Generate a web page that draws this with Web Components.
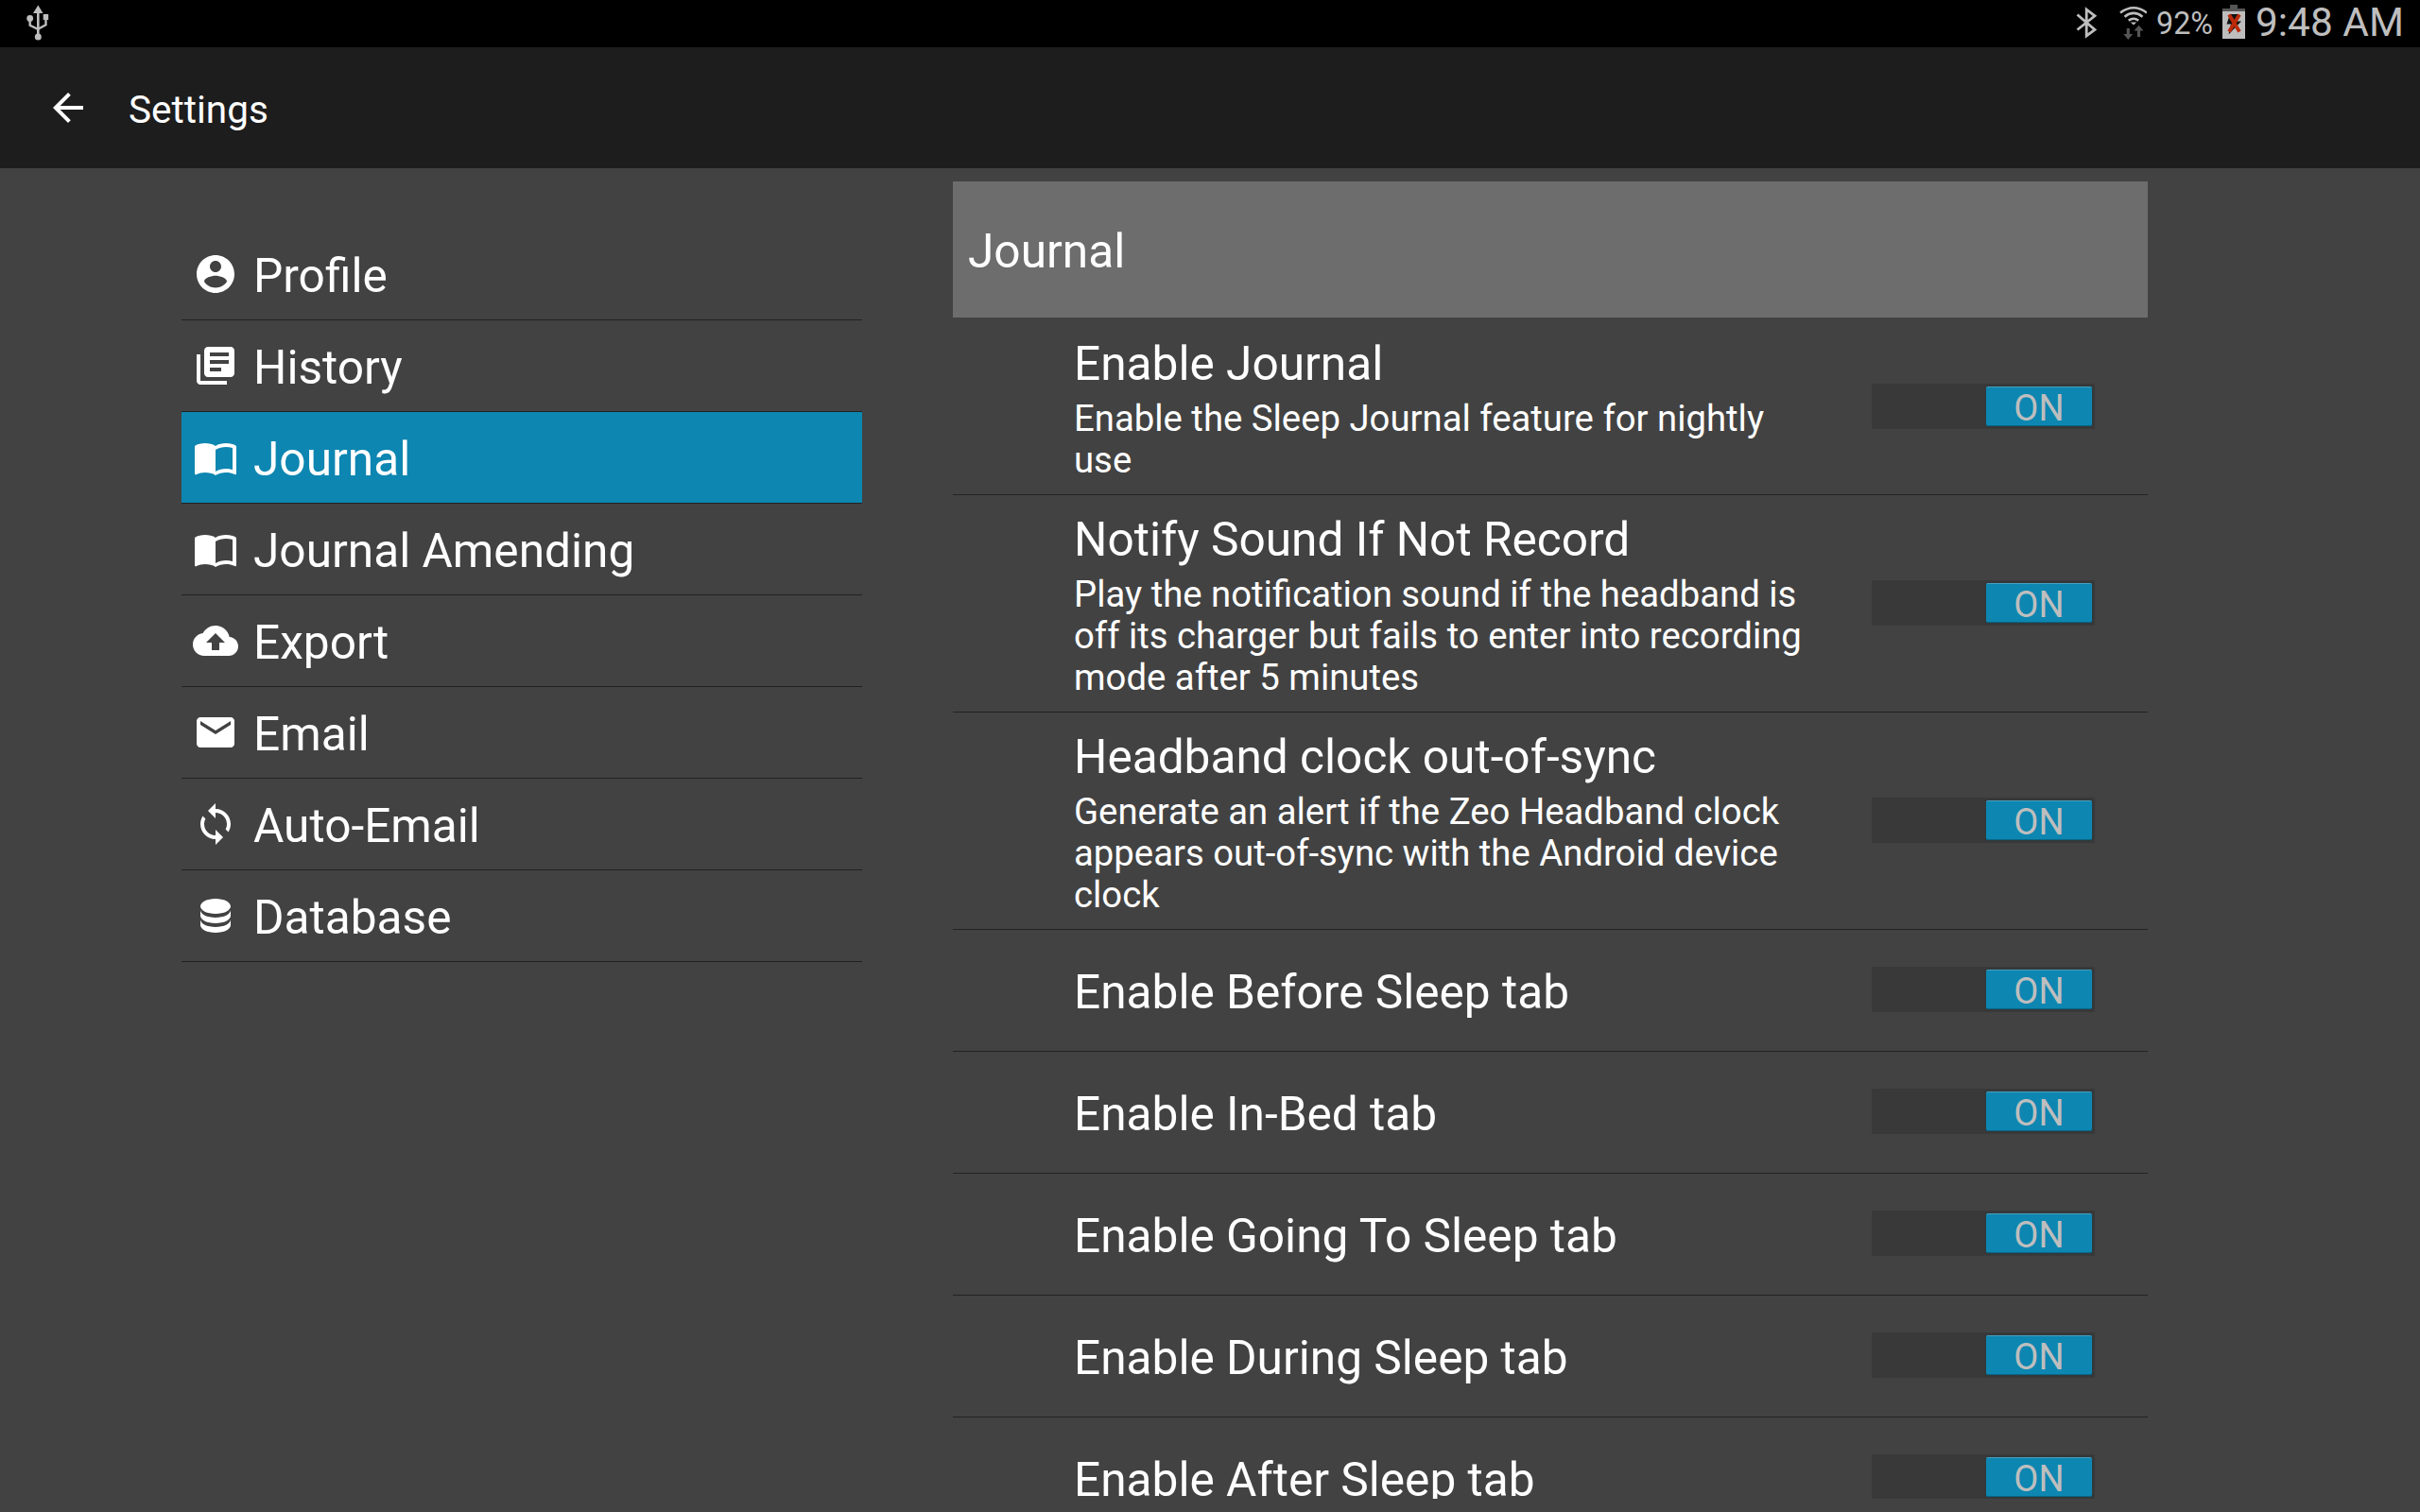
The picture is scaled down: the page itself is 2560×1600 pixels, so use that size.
<!DOCTYPE html>
<html lang="en">
<head>
<meta charset="utf-8">
<title>Settings</title>
<style>
html,body{margin:0;width:2560px;height:1600px;overflow:hidden;background:#424242;color:#fff;font-family:Roboto,"Liberation Sans",sans-serif}
</style>
</head>
<body>
<settings-app></settings-app>
<script>
const define = (name, html, after) => customElements.define(name, class extends HTMLElement {
  constructor() {
    super();
    this.attachShadow({ mode: 'open' }).innerHTML = html;
  }
  connectedCallback() { if (after) after(this, this.shadowRoot); }
});

const ICONS = {
  profile: '<path d="M12 2C6.48 2 2 6.48 2 12s4.48 10 10 10 10-4.48 10-10S17.52 2 12 2zm0 3c1.66 0 3 1.34 3 3s-1.34 3-3 3-3-1.34-3-3 1.34-3 3-3zm0 14.2c-2.5 0-4.71-1.28-6-3.22.03-1.99 4-3.08 6-3.08 1.99 0 5.97 1.09 6 3.08-1.29 1.94-3.5 3.22-6 3.22z"/>',
  history: '<path d="M4 6H2v14c0 1.1.9 2 2 2h14v-2H4V6zm16-4H8c-1.1 0-2 .9-2 2v12c0 1.1.9 2 2 2h12c1.1 0 2-.9 2-2V4c0-1.1-.9-2-2-2zm-1 9H9V9h10v2zm-4 4H9v-2h6v2zm4-8H9V5h10v2z"/>',
  book: '<path d="M21 5c-1.11-.35-2.33-.5-3.5-.5-1.95 0-4.05.4-5.5 1.5-1.45-1.1-3.55-1.5-5.5-1.5S2.45 4.900 1 6v14.650c0 .25.25.5.5.5.1 0 .15-.05.25-.05C3.100 20.450 5.050 20 6.500 20c1.950 0 4.050.4 5.500 1.500 1.350-.85 3.800-1.500 5.500-1.500 1.650 0 3.350.3 4.750 1.050.1.050.15.050.25.050.25 0 .5-.25.5-.5V6c-.6-.45-1.25-.75-2-1zm0 13.500c-1.100-.35-2.300-.5-3.500-.5-1.700 0-4.150.65-5.500 1.500V8c1.350-.85 3.800-1.500 5.500-1.500 1.200 0 2.400.15 3.500.5v11.500z"/>',
  upload: '<path d="M19.350 10.040C18.670 6.590 15.640 4 12 4 9.110 4 6.600 5.640 5.350 8.040 2.340 8.360 0 10.910 0 14c0 3.310 2.690 6 6 6h13c2.760 0 5-2.240 5-5 0-2.640-2.050-4.780-4.650-4.960zM14 13v4h-4v-4H7l5-5 5 5h-3z"/>',
  email: '<path d="M20 4H4c-1.100 0-1.990.9-1.990 2L2 18c0 1.100.9 2 2 2h16c1.100 0 2-.9 2-2V6c0-1.100-.9-2-2-2zm0 4l-8 5-8-5V6l8 5 8-5v2z"/>',
  sync: '<path d="M12 4V1L8 5l4 4V6c3.310 0 6 2.690 6 6 0 1.010-.25 1.970-.7 2.800l1.460 1.460C19.540 15.030 20 13.570 20 12c0-4.420-3.580-8-8-8zm0 14c-3.310 0-6-2.690-6-6 0-1.010.25-1.970.7-2.800L5.240 7.740C4.460 8.970 4 10.430 4 12c0 4.420 3.580 8 8 8v3l4-4-4-4v3z"/>',
  database: '<path d="M12 3C7.600 3 4 4.800 4 7s3.600 4 8 4 8-1.800 8-4-3.600-4-8-4zM4 9v3c0 2.200 3.600 4 8 4s8-1.800 8-4V9c0 2.200-3.600 4-8 4s-8-1.800-8-4zM4 14v3c0 2.200 3.600 4 8 4s8-1.800 8-4v-3c0 2.200-3.600 4-8 4s-8-1.800-8-4z"/>',
  back: '<path d="M20 11H7.830l5.590-5.590L12 4l-8 8 8 8 1.410-1.410L7.830 13H20v-2z"/>'
};

customElements.define('ui-icon', class extends HTMLElement {
  static observedAttributes = ['name'];
  constructor() {
    super();
    this.attachShadow({ mode: 'open' }).innerHTML = '<style>:host{display:block;width:48px;height:48px;flex:none}svg{display:block;width:100%;height:100%;fill:currentColor}</style><svg viewBox="0 0 24 24"></svg>';
  }
  attributeChangedCallback(attr, old, value) {
    this.shadowRoot.querySelector('svg').innerHTML = ICONS[value] || '';
  }
});

define('status-bar', `<style>
:host{display:flex;height:50px;box-sizing:border-box;background:#000;color:#bebebe;justify-content:space-between}
svg{display:block;flex:none}
.left{padding:4px 0 0 26px}
.right{display:flex;align-items:flex-start;padding-right:19px}
.pct{font-size:32.300px;line-height:50px;margin-left:10px;width:70px;white-space:nowrap}
.time{font-size:42.400px;line-height:48px;margin-left:11px;width:155px;white-space:nowrap}
.wifi{margin-left:22px}
</style>
<div class="left"><svg width="28" height="40" viewBox="0 0 28 40" fill="#bebebe" stroke="none">
<path d="M14.300 1.500L19.500 10H9z"/><path d="M13 9h2.600v24H13z"/><circle cx="14.300" cy="35" r="3.500"/><circle cx="5.700" cy="15.500" r="3.400"/><path d="M19.700 11h5.500v6h-5.500z"/>
<path d="M5.700 17v5.700l8.600 4.300M22.500 16v6.300L14.300 26.800" fill="none" stroke="#bebebe" stroke-width="2.400"/></svg></div>
<div class="right">
<svg width="24" height="50" viewBox="0 0 24 50" fill="none" stroke="#bebebe" stroke-width="2.800"><path d="M2.500 15.500L21 31.500 12.200 38V10L21 16.800 2.500 31.500"/></svg>
<svg class="wifi" width="30" height="50" viewBox="0 0 30 50" fill="none" stroke="#bebebe" stroke-width="2.600"><path d="M2 13.500Q16 3 30 13.500M6.500 17.700Q16 10.200 25.500 17.700M10.800 21.800Q16 17.700 21.200 21.800"/><path d="M12.800 23.500h6.400L16 26.500z" fill="#bebebe" stroke="none"/><path d="M8.700 30h3.200v6h3.300L10.300 42l-5-6h3.400zM19.900 39v-6.500h-3.400l5-5.800 5 5.800h-3.400V39z" fill="#555" stroke="none"/></svg>
<span class="pct">92%</span>
<svg width="24" height="50" viewBox="0 0 24 50"><path d="M8 5h8v4h8v4H0V9h8z" fill="#555"/><path d="M0 12h24v29H0z" fill="#bebebe"/><path d="M8 15h9l-2 7.500h5L6.500 36.500 9 25.500H4.500z" fill="#111"/><path d="M7 15.500l11 18M18 15.500l-11 18" stroke="#bc2a0a" stroke-width="3.800"/></svg>
<span class="time">9:48 AM</span></div>`);

define('app-bar', `<style>
:host{display:flex;align-items:center;height:128px;background:#1d1d1d}
ui-icon{margin-left:48px}
.t{font-size:40.500px;line-height:56px;margin-left:40px;padding-top:3px;white-space:nowrap}
</style><ui-icon name="back"></ui-icon><div class="t"><slot></slot></div>`);

define('nav-item', `<style>
:host{display:flex;align-items:center;height:96px;padding-left:12px;border-bottom:1px solid #222}
:host([selected]){background:#0d86b1}
.t{font-size:49.600px;line-height:56px;margin-left:16px;padding-top:4px;white-space:nowrap}
</style><ui-icon></ui-icon><div class="t"><slot></slot></div>`,
  (el, root) => root.querySelector('ui-icon').setAttribute('name', el.getAttribute('icon')));

define('toggle-switch', `<style>
:host{display:flex;box-sizing:border-box;width:236px;height:48px;background:#393939;justify-content:flex-end;padding:3px 3px 3px 0;flex:none}
.thumb{box-sizing:border-box;width:112px;height:42px;border-radius:2px;background:#0d86b1;border-top:1px solid #4aa0bf;border-bottom:1px solid #096585;box-shadow:0 0 1px 1px #303a3e;color:#bebebe;font-size:38px;line-height:44px;text-align:center}
</style><div class="thumb">ON</div>`);

define('setting-row', `<style>
:host{--text-top:38px;--switch-top:39px;display:flex;align-items:flex-start;height:128px;padding-left:128px;border-bottom:1px solid #222}
:host([lines="2"]){--text-top:21px;--switch-top:70px;height:187px}
:host([lines="3"]){--text-top:19px;--switch-top:90px;height:229px}
.text{width:788px;margin-right:56px;padding-top:var(--text-top)}
.t{font-size:49.600px;line-height:56px;white-space:nowrap}
.s{font-size:38.300px;line-height:44px;white-space:nowrap;margin-top:8px}
.s ::slotted(span){display:block}
toggle-switch{margin-top:var(--switch-top)}
</style><div class="text"><div class="t"></div><div class="s"><slot></slot></div></div><toggle-switch></toggle-switch>`,
  (el, root) => { root.querySelector('.t').textContent = el.getAttribute('label'); });

define('settings-nav', `<style>:host{display:block;width:720px;margin:64px 0 0 192px;flex:none}</style>
<nav-item icon="profile">Profile</nav-item>
<nav-item icon="history">History</nav-item>
<nav-item icon="book" selected>Journal</nav-item>
<nav-item icon="book">Journal Amending</nav-item>
<nav-item icon="upload">Export</nav-item>
<nav-item icon="email">Email</nav-item>
<nav-item icon="sync">Auto-Email</nav-item>
<nav-item icon="database">Database</nav-item>`);

define('settings-panel', `<style>
:host{display:block;width:1264px;height:1394px;margin:14px 0 0 96px;overflow:hidden;flex:none}
h1{margin:0;font-weight:400;font-size:49.600px;box-sizing:border-box;height:144px;line-height:148px;padding-left:16px;background:#6d6d6d}
</style>
<h1>Journal</h1>
<setting-row lines="2" label="Enable Journal"><span>Enable the Sleep Journal feature for nightly</span><span>use</span></setting-row>
<setting-row lines="3" label="Notify Sound If Not Record"><span>Play the notification sound if the headband is</span><span>off its charger but fails to enter into recording</span><span>mode after 5 minutes</span></setting-row>
<setting-row lines="3" label="Headband clock out-of-sync"><span>Generate an alert if the Zeo Headband clock</span><span>appears out-of-sync with the Android device</span><span>clock</span></setting-row>
<setting-row label="Enable Before Sleep tab"></setting-row>
<setting-row label="Enable In-Bed tab"></setting-row>
<setting-row label="Enable Going To Sleep tab"></setting-row>
<setting-row label="Enable During Sleep tab"></setting-row>
<setting-row label="Enable After Sleep tab"></setting-row>`);

define('settings-app', `<style>:host{display:block;width:2560px;height:1600px;overflow:hidden}main{display:flex;align-items:flex-start}</style>
<status-bar></status-bar><app-bar>Settings</app-bar><main><settings-nav></settings-nav><settings-panel></settings-panel></main>`);
</script>
</body>
</html>
